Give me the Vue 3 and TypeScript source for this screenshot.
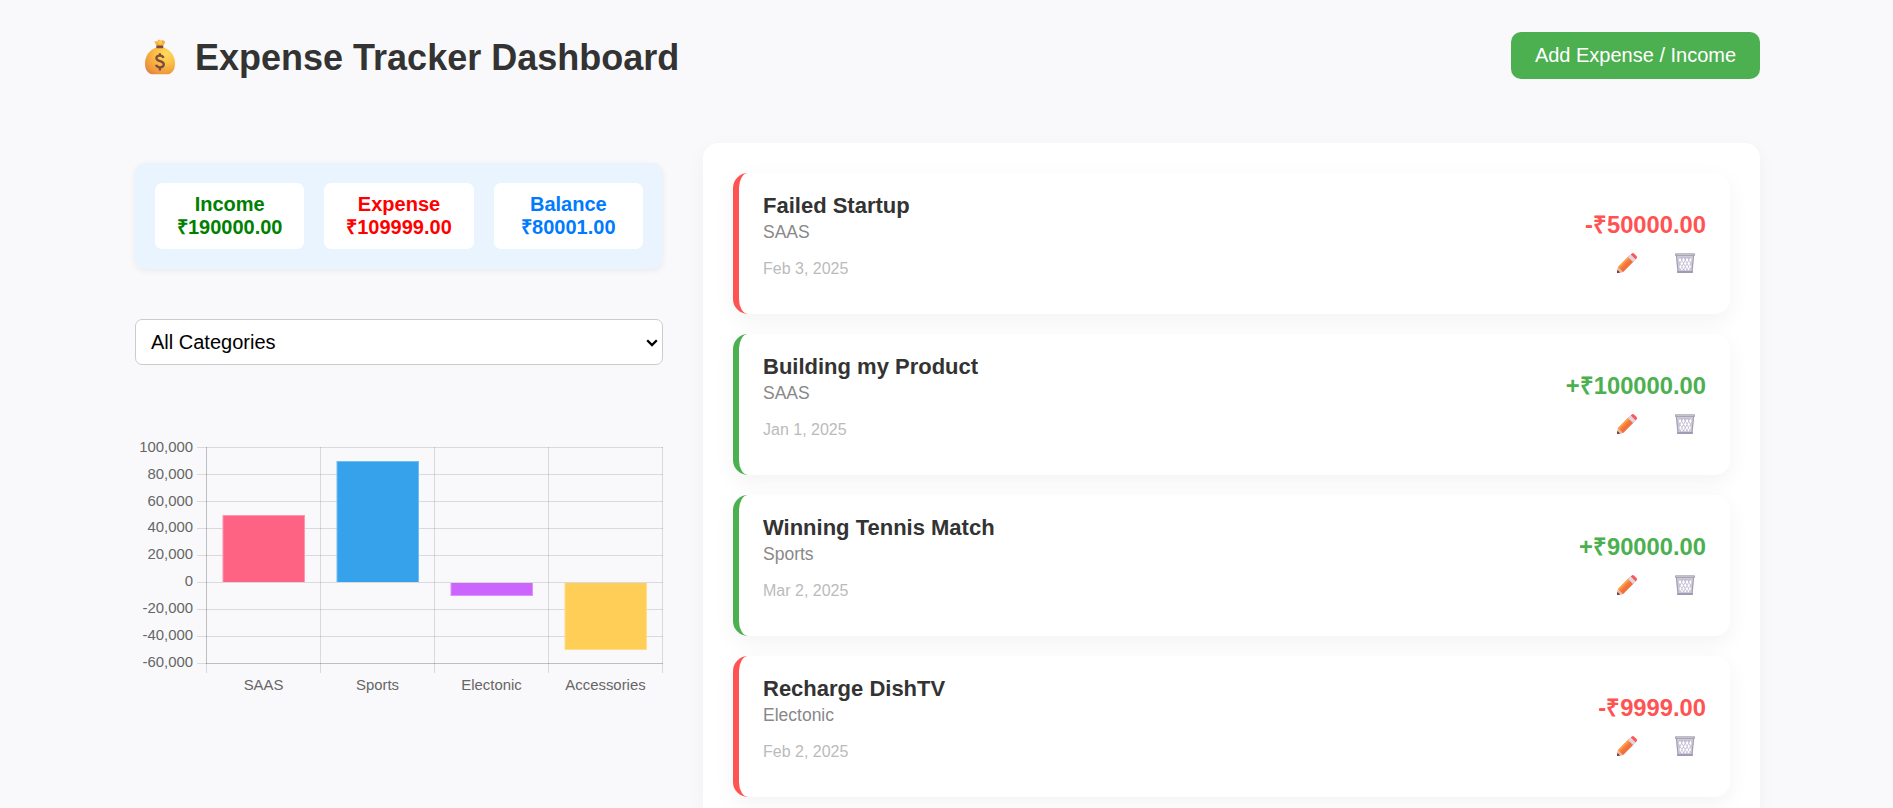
<script setup lang="ts">
interface Transaction {
  title: string
  category: string
  date: string
  amount: number
}

interface Bar {
  label: string
  value: number
  fill: string
  stroke: string
}

const transactions: Transaction[] = [
  { title: 'Failed Startup', category: 'SAAS', date: 'Feb 3, 2025', amount: -50000 },
  { title: 'Building my Product', category: 'SAAS', date: 'Jan 1, 2025', amount: 100000 },
  { title: 'Winning Tennis Match', category: 'Sports', date: 'Mar 2, 2025', amount: 90000 },
  { title: 'Recharge DishTV', category: 'Electonic', date: 'Feb 2, 2025', amount: -9999 },
]

const income = 190000
const expense = 109999

const money = (n: number): string => '₹' + Math.abs(n).toFixed(2)
const signed = (n: number): string => (n < 0 ? '-' : '+') + money(n)

const bars: Bar[] = [
  { label: 'SAAS', value: 50000, fill: '#ff6384', stroke: '#ff96ac' },
  { label: 'Sports', value: 90000, fill: '#36a2eb', stroke: '#72bef1' },
  { label: 'Electonic', value: -9999, fill: '#cc65fe', stroke: '#db93fe' },
  { label: 'Accessories', value: -50000, fill: '#ffce56', stroke: '#ffdd89' },
]

const ticks: number[] = [100000, 80000, 60000, 40000, 20000, 0, -20000, -40000, -60000]
const tickY = (i: number): number => 17.5 + i * 27
const barTop = (v: number): number => (v > 0 ? Math.round(152 - (v / 20000) * 27) : 153)
const barHeight = (v: number): number => Math.floor((Math.abs(v) / 20000) * 27)
</script>

<template>
  <main class="page">
    <header class="header">
      <h1 class="heading">
        <svg class="bag" viewBox="0 0 30 36" aria-hidden="true">
          <defs>
            <radialGradient id="bagFill" cx="0.7" cy="0.25" r="0.95">
              <stop offset="0" stop-color="#ffdc5c" />
              <stop offset="0.4" stop-color="#fbbe45" />
              <stop offset="0.8" stop-color="#ee953c" />
              <stop offset="1" stop-color="#d87745" />
            </radialGradient>
          </defs>
          <path d="M9.300 2.200 12 2.400 13.800.4 16 1.800 18 1 20.400 3 18 7.200H11.600Z" fill="#f7b13d" />
          <path d="M13 3.200 14.200 1.500 17 3 15.500 6Z" fill="#ffcf50" />
          <path d="M11.200 8.500C5 10.500 0 16.800 0 24.400 0 31.500 3.500 35.300 8.500 35.300h13c5 0 8.500-3.800 8.500-10.900 0-7.600-5-13.900-11.200-15.900Z" fill="url(#bagFill)" />
          <rect x="11.300" y="6.500" width="7" height="2.800" rx="0.900" fill="#7b4a42" />
          <path d="M18.500 18.900c-.5-1.500-1.800-2.200-3.600-2.200-2.100 0-3.500 1-3.500 2.600 0 1.900 1.800 2.300 3.600 2.800 2 .6 3.800 1.200 3.800 3.200 0 1.900-1.600 3-3.800 3-2.100 0-3.500-.9-3.900-2.600M14.900 14.200v2.500M14.900 28.300v3.200" fill="none" stroke="#7d4a3f" stroke-width="2.300" />
        </svg>
        <span>Expense Tracker Dashboard</span>
      </h1>
      <button class="add" type="button">Add Expense / Income</button>
    </header>

    <div class="columns">
      <aside class="sidebar">
        <section class="summary">
          <div class="stat income"><span>Income</span><span>{{ money(income) }}</span></div>
          <div class="stat expense"><span>Expense</span><span>{{ money(expense) }}</span></div>
          <div class="stat balance"><span>Balance</span><span>{{ money(income - expense) }}</span></div>
        </section>

        <div class="filter">
          <select class="select">
            <option>All Categories</option>
          </select>
          <svg class="chevron" viewBox="0 0 12 8" aria-hidden="true">
            <path d="M1.200 1.300 6 6.100 10.800 1.300" fill="none" stroke="#000" stroke-width="2.300" />
          </svg>
        </div>

        <svg class="chart" width="529" height="270" viewBox="0 0 529 270">
          <g v-for="(t, i) in ticks" :key="t">
            <line x1="62" x2="528" :y1="tickY(i)" :y2="tickY(i)" class="grid" />
            <text x="58" :y="tickY(i) + 4.200 - i * 0.100" text-anchor="end">{{ t.toLocaleString('en-US') }}</text>
          </g>
          <line v-for="n in 5" :key="n" :x1="n * 114 - 42.500" :x2="n * 114 - 42.500" y1="17" y2="243" class="grid" />
          <line x1="71.500" x2="71.500" y1="17" y2="234" class="axis" />
          <line x1="71" x2="528" y1="233.500" y2="233.500" class="axis" />
          <g v-for="(b, i) in bars" :key="b.label">
            <rect :x="87.500 + i * 114" :y="barTop(b.value)" width="82.500" :height="barHeight(b.value)" :fill="b.stroke" />
            <rect
              :x="88.500 + i * 114"
              :y="barTop(b.value) + (b.value > 0 ? 1 : 0)"
              width="80.500"
              :height="barHeight(b.value) - 1"
              :fill="b.fill"
            />
            <text :x="128.500 + i * 114" y="260" text-anchor="middle">{{ b.label }}</text>
          </g>
        </svg>
      </aside>

      <section class="panel">
        <article
          v-for="t in transactions"
          :key="t.title"
          class="card"
          :class="t.amount < 0 ? 'out' : 'in'"
        >
          <div class="info">
            <h3>{{ t.title }}</h3>
            <p class="category">{{ t.category }}</p>
            <p class="date">{{ t.date }}</p>
          </div>
          <div class="side">
            <strong class="amount">{{ signed(t.amount) }}</strong>
            <div class="actions">
              <svg width="20" height="20" viewBox="0 0 20 20" aria-label="Edit">
                <path d="M1 13.900 12.400 2.600 17.400 7.600 6 18.900 0 20Z" fill="#f9803a" />
                <path d="M3.500 16.400 14.900 5.100 17.400 7.600 6 18.900Z" fill="#f07040" />
                <path d="M1 13.900 12.400 2.600 13.600 3.800 2.200 15.100Z" fill="#ffa04a" />
                <path d="M1 13.900 6 18.900 0 20Z" fill="#eab997" />
                <path d="M.5 17 3 19.500 0 20Z" fill="#4d304e" />
                <path d="M11 4 13.600 1.400 18.600 6.400 16 9Z" fill="#dcd5e9" />
                <path d="M13.600 1.400 14.800.4Q16 -.3 17 .6L19.500 3.100Q20.400 4.200 19.600 5.300L18.600 6.400Z" fill="#f95a54" />
              </svg>
              <svg width="20" height="20" viewBox="0 0 20 20" aria-label="Delete">
                <path d="M.8 2H19.200L17.700 19.500H2.300Z" fill="#d0cbdb" />
                <path d="M4 4h12L15 17.500H5Z" fill="#c4bdd3" />
                <path d="M1.500 3 3.100 19M18.500 3 16.900 19" stroke="#a09aae" stroke-width="1" />
                <g fill="#fff">
                  <path d="M5 4.700 6.400 7 5 9.400 3.800 7ZM8.500 4.700 9.800 7 8.500 9.400 7.100 7ZM12 4.700 13.400 7 12 9.400 10.700 7ZM15.500 4.700 16.500 7 15.300 9.400 14.100 7Z" />
                  <path d="M6.800 8 8.200 10.400 6.800 12.800 5.400 10.400ZM10.300 8 11.700 10.400 10.300 12.800 8.900 10.400ZM13.700 8 15.100 10.400 13.700 12.800 12.400 10.400Z" />
                  <path d="M5.300 11.400 6.600 13.700 5.500 16 4.300 13.700ZM8.600 11.400 9.900 13.700 8.600 16 7.300 13.700ZM12 11.400 13.300 13.700 12 16 10.700 13.700ZM15 11.400 15.900 13.700 14.800 16 13.800 13.700Z" />
                  <path d="M7 14.600 8.100 16.300 7 17.600 5.900 16.300ZM10.300 14.600 11.400 16.300 10.300 17.600 9.200 16.300ZM13.500 14.600 14.500 16.300 13.500 17.600 12.400 16.300Z" />
                </g>
                <rect x="0" y="0.200" width="20" height="2.800" rx="0.900" fill="#a8a4b0" />
                <rect x="1.200" y="0.800" width="17.600" height="0.900" fill="#d2ceda" />
                <rect x="2" y="18" width="16" height="2" rx="0.700" fill="#a29ab4" />
              </svg>
            </div>
          </div>
        </article>
      </section>
    </div>
  </main>
</template>

<style>
html,
body {
  margin: 0;
  height: 808px;
  overflow: hidden;
  background: #f9f9fb;
}
</style>

<style scoped>
.page {
  box-sizing: border-box;
  width: 1625px;
  height: 808px;
  margin-left: 135px;
  padding-top: 32px;
  font-family: Arial, 'Liberation Sans', sans-serif;
}

.header {
  display: flex;
  align-items: flex-start;
  justify-content: space-between;
  height: 111px;
}

.heading {
  display: flex;
  align-items: flex-start;
  gap: 20px;
  margin: 5px 0 0 10px;
  font-size: 36px;
  line-height: 41px;
  color: #333;
}

.bag {
  width: 30px;
  height: 36px;
  margin-top: 2px;
}

.add {
  width: 249px;
  height: 47px;
  padding: 0 0 1px;
  border: 0;
  border-radius: 10px;
  background: #4caf50;
  color: #fff;
  font: 20px/23px Arial, 'Liberation Sans', sans-serif;
}

.columns {
  display: grid;
  grid-template-columns: 528px 1057px;
  gap: 40px;
}

.sidebar {
  padding-top: 20px;
}

.summary {
  display: grid;
  grid-template-columns: repeat(3, 1fr);
  gap: 20px;
  padding: 20px;
  border-radius: 10px;
  background: #e9f4ff;
  box-shadow: 0 2px 6px rgba(0, 0, 0, 0.06);
}

.stat {
  display: flex;
  flex-direction: column;
  align-items: center;
  padding: 10px 0;
  border-radius: 7px;
  background: #fff;
  font-size: 20px;
  font-weight: 700;
  line-height: 23px;
}

.income {
  color: #008000;
}

.expense {
  color: #ff0000;
}

.balance {
  color: #007bff;
}

.filter {
  position: relative;
  margin-top: 50px;
}

.select {
  display: block;
  box-sizing: border-box;
  width: 528px;
  height: 46px;
  padding: 0 15px;
  border: 1px solid #ccc;
  border-radius: 7px;
  appearance: none;
  background: #fff;
  color: #000;
  font: 20px Arial, 'Liberation Sans', sans-serif;
}

.chevron {
  position: absolute;
  top: 20px;
  right: 5px;
  width: 12px;
  height: 8px;
}

.chart {
  display: block;
  margin-top: 65px;
}

.chart text {
  fill: #666;
  font-size: 14.9px;
}

.grid {
  stroke: rgba(0, 0, 0, 0.12);
}

.axis {
  stroke: rgba(0, 0, 0, 0.12);
}

.panel {
  box-sizing: border-box;
  display: flex;
  flex-direction: column;
  gap: 20px;
  height: 665px;
  padding: 30px 30px 0;
  border-radius: 15px 15px 0 0;
  background: #fff;
  box-shadow: 0 5px 19px rgba(0, 0, 0, 0.04);
}

.card {
  box-sizing: border-box;
  display: flex;
  justify-content: space-between;
  flex: none;
  height: 141px;
  padding: 19px 24px 0;
  border-left: 6px solid;
  border-radius: 15px;
  background: #fff;
  box-shadow: 0 7px 22px rgba(0, 0, 0, 0.05);
}

.card.out {
  border-left-color: #ff5252;
}

.card.in {
  border-left-color: #4caf50;
}

h3 {
  margin: 1px 0 0;
  font-size: 22px;
  line-height: 26px;
  color: #333;
}

.category {
  margin: 3px 0 0;
  font-size: 17.5px;
  line-height: 20px;
  color: #888;
}

.date {
  margin: 18px 0 0;
  font-size: 16px;
  line-height: 18px;
  color: #bbb;
}

.side {
  display: flex;
  flex-direction: column;
  align-items: flex-end;
  padding-top: 19px;
}

.amount {
  font-size: 23.75px;
  line-height: 27px;
}

.out .amount {
  color: #ff5252;
}

.in .amount {
  color: #4caf50;
}

.actions {
  display: flex;
  gap: 38px;
  margin: 15px 11px 0 0;
}
</style>
